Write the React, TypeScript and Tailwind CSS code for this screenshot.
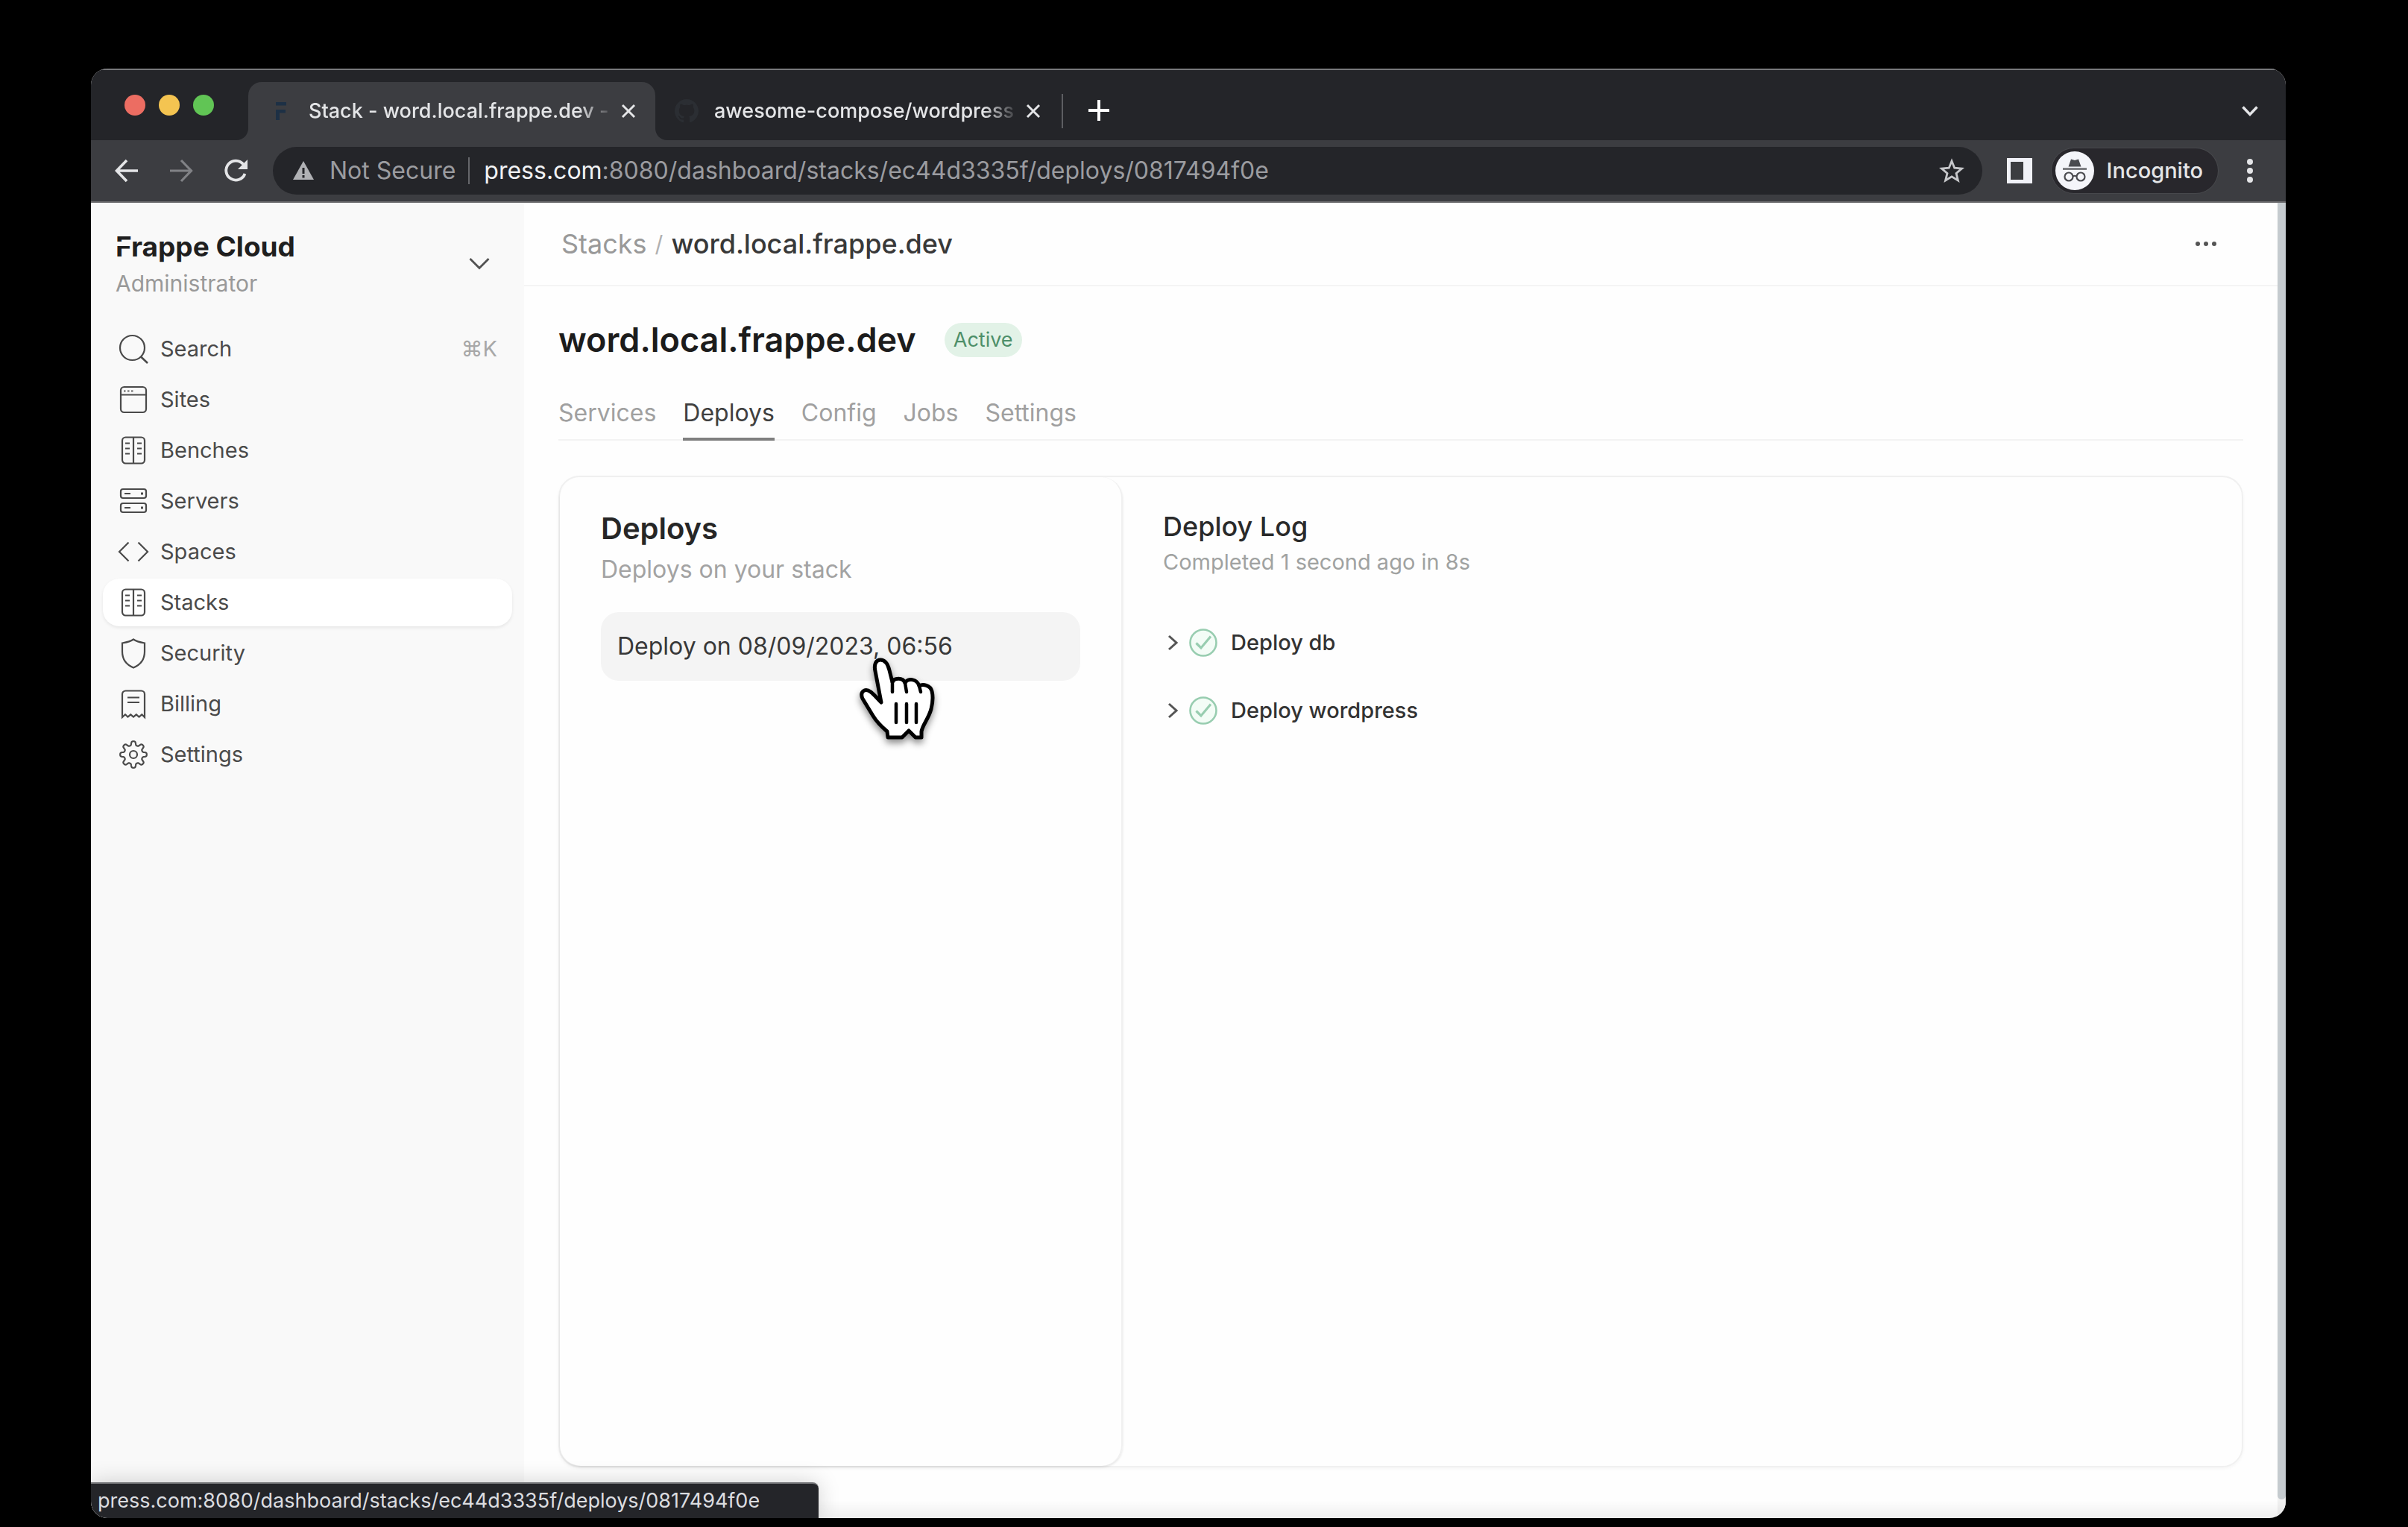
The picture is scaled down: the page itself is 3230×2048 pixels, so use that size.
import { useState, ReactNode } from "react";
import clsx from "clsx";

const DEPLOY_URL = "/dashboard/stacks/ec44d3335f/deploys/0817494f0e";

// Outline of the cog: a circle with eight soft teeth
const gearPath = (() => {
  const points: string[] = [];
  for (let i = 0; i < 160; i++) {
    const angle = (i / 160) * Math.PI * 2;
    const wave = Math.tanh(2 * Math.cos(8 * angle)) / Math.tanh(2);
    const radius = 15.2 + 2.6 * wave;
    points.push(`${(21 + radius * Math.sin(angle)).toFixed(2)} ${(21 - radius * Math.cos(angle)).toFixed(2)}`);
  }
  return `M${points.join("L")}Z`;
})();

function NavIcon({ children }: { children: ReactNode }) {
  return (
    <svg viewBox="0 0 42 42" className="size-[42px] shrink-0" fill="none" stroke="currentColor" strokeWidth="2.2" aria-hidden="true">
      {children}
    </svg>
  );
}

const icons: Record<string, ReactNode> = {
  search: (
    <NavIcon>
      <circle cx="19.5" cy="19.5" r="16.5" />
      <path d="M31 31.5 40 40" strokeWidth="2.6" />
    </NavIcon>
  ),
  window: (
    <NavIcon>
      <rect x="4" y="4" width="34" height="34" rx="4.5" />
      <path d="M4 14.5H38" />
      <path d="M8 9.5h2.5M13 9.5h2.5M18 9.5h2.5" strokeWidth="2.5" opacity="0.7" />
    </NavIcon>
  ),
  cabinet: (
    <NavIcon>
      <rect x="6" y="3.5" width="30" height="35" rx="4.5" />
      <path d="M21 3.5V38.5" />
      <path d="M10 11.5h6M10 18.5h6M10 25.5h6M26 11.5h6M26 18.5h6M26 25.5h6" />
    </NavIcon>
  ),
  servers: (
    <NavIcon>
      <rect x="4" y="5" width="34" height="12" rx="3" />
      <rect x="4" y="24" width="34" height="12" rx="3" />
      <path d="M9 11h8M9 30h8" />
      <path d="M31 11h3M31 30h3" strokeWidth="3" />
    </NavIcon>
  ),
  code: (
    <NavIcon>
      <path d="M14.5 8.5 2 21l12.5 12.5M27.5 8.5 40 21 27.5 33.5" />
    </NavIcon>
  ),
  shield: (
    <NavIcon>
      <path d="M21 2.5 C25 5.5 30 6.5 36 7.5 V19 C36 29 30.5 36.5 21 40.5 C11.5 36.5 6 29 6 19 V7.5 C12 6.5 17 5.5 21 2.5Z" />
    </NavIcon>
  ),
  receipt: (
    <NavIcon>
      <path d="M6 39V8a4.5 4.5 0 0 1 4.5-4.5h21A4.5 4.5 0 0 1 36 8v31l-3.7-3.7-3.8 3.2-3.7-3.2-3.8 3.2-3.7-3.2-3.8 3.2-3.5-3.2Z" />
      <path d="M13 12.5h16M13 19h16" />
    </NavIcon>
  ),
  gear: (
    <NavIcon>
      <path d={gearPath} strokeLinejoin="round" />
      <circle cx="21" cy="21" r="5" />
    </NavIcon>
  ),
};

const navItems = [
  { label: "Search", icon: "search", shortcut: "⌘K" },
  { label: "Sites", icon: "window" },
  { label: "Benches", icon: "cabinet" },
  { label: "Servers", icon: "servers" },
  { label: "Spaces", icon: "code" },
  { label: "Stacks", icon: "cabinet" },
  { label: "Security", icon: "shield" },
  { label: "Billing", icon: "receipt" },
  { label: "Settings", icon: "gear" },
];

const tabs = ["Services", "Deploys", "Config", "Jobs", "Settings"];

const deploySteps = ["Deploy db", "Deploy wordpress"];

function CloseIcon() {
  return (
    <svg viewBox="0 0 20 20" className="size-5" fill="none" stroke="currentColor" strokeWidth="3" aria-hidden="true">
      <path d="M2 2 18 18M18 2 2 18" />
    </svg>
  );
}

function BrowserTab({ title, active, favicon }: { title: string; active?: boolean; favicon: ReactNode }) {
  return (
    <div
      className={clsx(
        "flex h-[78px] items-center text-[#e4e5e7]",
        active ? "w-[546px] rounded-t-[18px] bg-[#3c3d41] pr-[26px] pl-7" : "w-[529px] pr-[28px] pl-[10px]"
      )}
    >
      <span className="flex w-8 shrink-0 justify-center">{favicon}</span>
      <span className="mr-2 ml-[21px] flex-1 mask-r-from-88% text-[27px] leading-9 font-medium whitespace-nowrap">{title}</span>
      <button type="button" aria-label="Close tab">
        <CloseIcon />
      </button>
    </div>
  );
}

function TabStrip() {
  return (
    <div className="flex h-24 items-end border-t-2 border-[#77787b] bg-[#242529] pr-[37px] pl-[45px]">
      <div className="mr-[30px] flex gap-[18px] self-center">
        <span className="size-7 rounded-full bg-[#ec6d62]" />
        <span className="size-7 rounded-full bg-[#f4c451]" />
        <span className="size-7 rounded-full bg-[#61c555]" />
      </div>
      <svg viewBox="0 0 16 16" className="size-4 fill-[#3c3d41]" aria-hidden="true">
        <path d="M16 0V16H0C9 16 16 9 16 0Z" />
      </svg>
      <BrowserTab
        active
        title="Stack - word.local.frappe.dev -"
        favicon={
          <svg viewBox="0 0 16 24" className="h-6 w-4 fill-[#1d3045]" aria-hidden="true">
            <path d="M1 0H15V4.5H1ZM1 10H14V14.5H6V24H1Z" />
          </svg>
        }
      />
      <svg viewBox="0 0 16 16" className="size-4 fill-[#3c3d41]" aria-hidden="true">
        <path d="M0 0V16H16C7 16 0 9 0 0Z" />
      </svg>
      <BrowserTab
        title="awesome-compose/wordpress"
        favicon={
          <svg viewBox="0 0 16 16" className="size-[34px] fill-[#2b2e33]" aria-hidden="true">
            <path d="M8 0C3.58 0 0 3.58 0 8c0 3.54 2.29 6.53 5.47 7.59.4.07.55-.17.55-.38 0-.19-.01-.82-.01-1.49-2.01.37-2.53-.49-2.69-.94-.09-.23-.48-.94-.82-1.13-.28-.15-.68-.52-.01-.53.63-.01 1.08.58 1.23.82.72 1.21 1.87.87 2.33.66.07-.52.28-.87.51-1.07-1.78-.2-3.64-.89-3.64-3.95 0-.87.31-1.59.82-2.15-.08-.2-.36-1.02.08-2.12 0 0 .67-.21 2.2.82.64-.18 1.32-.27 2-.27s1.36.09 2 .27c1.53-1.04 2.2-.82 2.2-.82.44 1.1.16 1.92.08 2.12.51.56.82 1.27.82 2.15 0 3.07-1.87 3.75-3.65 3.95.29.25.54.73.54 1.48 0 1.07-.01 1.93-.01 2.2 0 .21.15.46.55.38A8.01 8.01 0 0 0 16 8c0-4.42-3.58-8-8-8Z" />
          </svg>
        }
      />
      <div className="mb-4 h-[46px] w-0.5 bg-[#5d5e62]" />
      <button type="button" aria-label="New tab" className="mb-[26px] ml-[34px] text-white">
        <svg viewBox="0 0 28 28" className="size-7" fill="none" stroke="currentColor" strokeWidth="4" aria-hidden="true">
          <path d="M14 0V28M0 14H28" />
        </svg>
      </button>
      <button type="button" aria-label="Search tabs" className="mb-7 ml-auto text-[#e4e5e7]">
        <svg viewBox="0 0 22 22" className="size-[22px]" fill="none" stroke="currentColor" strokeWidth="3.5" aria-hidden="true">
          <path d="M1.5 5.5 11 15.5 20.5 5.5" />
        </svg>
      </button>
    </div>
  );
}

function Toolbar() {
  return (
    <div className="flex h-[84px] items-center border-b-2 border-[#6d6d6f] bg-[#3c3d41] pr-[42px] pl-[30px] text-[#e4e5e7]">
      <div className="mr-8 flex gap-[37px]">
        <button type="button" aria-label="Back">
          <svg viewBox="0 0 36 36" className="size-9" fill="none" stroke="currentColor" strokeWidth="3.6" aria-hidden="true">
            <path d="M33 18H5M18 4 4.5 18 18 32" />
          </svg>
        </button>
        <button type="button" aria-label="Forward" className="text-[#818286]">
          <svg viewBox="0 0 36 36" className="size-9" fill="none" stroke="currentColor" strokeWidth="3.2" aria-hidden="true">
            <path d="M3 18H31M18 4 31.5 18 18 32" />
          </svg>
        </button>
        <button type="button" aria-label="Reload">
          <svg viewBox="0 0 36 36" className="size-9" fill="none" stroke="currentColor" strokeWidth="3.8" aria-hidden="true">
            <path d="M28.5 9.5A13 13 0 1 0 30.5 22" />
            <path d="M34 3V16H21Z" fill="currentColor" stroke="none" />
          </svg>
        </button>
      </div>
      <div className="flex h-16 min-w-0 flex-1 items-center rounded-full bg-[#242529] pr-6 pl-[27px] text-[32px] leading-10 text-[#9b9ca0]">
        <svg viewBox="0 0 28 26" className="mr-[21px] h-[26px] w-7 shrink-0" aria-hidden="true">
          <path d="M14 0 28 25H0Z" fill="#b0b1b4" />
          <path d="M14 9V17M14 19V22.5" stroke="#242529" strokeWidth="3" />
        </svg>
        <span>Not Secure</span>
        <span className="mr-[19px] ml-[17px] h-9 w-0.5 bg-[#66676b]" />
        <span className="flex-1 truncate">
          <span className="text-[#f1f2f4]">press.com</span>:8080{DEPLOY_URL}
        </span>
        <button type="button" aria-label="Bookmark this page" className="text-[#c6c7ca]">
          <svg viewBox="0 0 34 34" className="size-[34px]" fill="none" stroke="currentColor" strokeWidth="2.8" aria-hidden="true">
            <path d="m17 4 3.7 9.2 9.8.8-7.5 6.4 2.4 9.6L17 24.8 8.6 30 11 20.4 3.5 14l9.8-.8Z" />
          </svg>
        </button>
      </div>
      <button type="button" aria-label="Side panel" className="ml-[33px]">
        <svg viewBox="0 0 34 34" className="size-[34px]" aria-hidden="true">
          <path d="M0 0H34V34H0ZM5 5V29H22V5Z" fill="#f1f2f8" fillRule="evenodd" />
        </svg>
      </button>
      <button type="button" className="ml-[26px] flex h-[60px] items-center gap-[17px] rounded-full bg-[#28272c] pr-5 pl-[5px] ring-1 ring-[#47484c]">
        <svg viewBox="0 0 52 52" className="size-[52px]" fill="none" stroke="#4a4b50" strokeWidth="2.2" aria-hidden="true">
          <circle cx="26" cy="26" r="26" fill="#f4f5fa" stroke="none" />
          <path d="M21 10.5 26 12 31 10.5 34.5 20.5H17.5Z" fill="#4a4b50" stroke="none" />
          <path d="M10 23.5H42" stroke="#7d7e83" strokeWidth="2.8" />
          <circle cx="18" cy="34" r="5.5" />
          <circle cx="34" cy="34" r="5.5" />
          <path d="M23.500 33.500Q26 32 28.500 33.500" />
        </svg>
        <span className="text-[29px] leading-9 font-medium">Incognito</span>
      </button>
      <button type="button" aria-label="Browser menu" className="ml-[37px]">
        <svg viewBox="0 0 12 36" className="h-9 w-3 fill-current" aria-hidden="true">
          <circle cx="6" cy="6" r="4" />
          <circle cx="6" cy="18" r="4" />
          <circle cx="6" cy="30" r="4" />
        </svg>
      </button>
    </div>
  );
}

function Sidebar() {
  return (
    <aside className="w-[581px] shrink-0 bg-[#f9f9f9] px-4 pt-[34px]">
      <button type="button" className="flex w-full items-center justify-between pr-[30px] pl-[17px] text-left">
        <span className="block">
          <span className="relative block text-[37px] leading-[50px] font-bold text-[#1f1f1f]">
            Frappe Cloud
            {/* notch in the F of the wordmark */}
            <span className="absolute top-[18px] left-0 h-1.5 w-5 bg-[#f9f9f9]" />
          </span>
          <span className="mt-1 block text-[30px] leading-10 text-[#999999]">Administrator</span>
        </span>
        <svg viewBox="0 0 28 28" className="size-7 text-[#525252]" fill="none" stroke="currentColor" strokeWidth="2.8" aria-hidden="true">
          <path d="M1.5 8 14 20.5 26.5 8" />
        </svg>
      </button>
      <nav className="mt-[36px] flex flex-col gap-1">
        {navItems.map((item) => (
          <a
            key={item.label}
            href="#"
            className={clsx(
              "flex h-16 items-center gap-[15px] rounded-[22px] pr-5 pl-5 text-[29px] leading-9 text-[#4a4a4a]",
              item.label === "Stacks" && "bg-white shadow-[0_2px_4px_rgba(0,0,0,0.08)]"
            )}
          >
            {icons[item.icon]}
            <span>{item.label}</span>
            {item.shortcut && <span className="ml-auto text-[#a8a8a8]">{item.shortcut}</span>}
          </a>
        ))}
      </nav>
    </aside>
  );
}

function HandPointer() {
  return (
    <svg
      viewBox="-4 -4 112 124"
      className="pointer-events-none absolute top-[239px] left-[398px] h-[124px] w-28 drop-shadow-[0_5px_5px_rgba(0,0,0,0.45)]"
      fill="none"
      stroke="#000000"
      strokeWidth="5"
      strokeLinejoin="round"
      strokeLinecap="round"
      aria-hidden="true"
    >
      <path
        d="M29 59 21 17C19 8 22 2 28 2C35 2 38 8 40 16L44 32C46 26 58 25 61 33C64 26 77 27 80 37C85 34 95 36 97 44C99 52 98 60 96 68C92 82 85 88 83 98V106H75L66 97 57 106H38L37 98C30 92 24 87 18 77L4 54C0 45 7 39 15 45C20 49 25 55 29 59Z"
        fill="#ffffff"
      />
      <path d="M44 32V45M61 33 63 45M80 37 82 45" strokeWidth="4.5" />
      <path d="M49 61V86M63 61V86M76 61V86" strokeWidth="4.5" />
    </svg>
  );
}

function DeployList() {
  return (
    <section className="relative w-[755px] shrink-0 rounded-[28px] border-r-2 border-[#f0f0f0] pt-[45px] pr-[55px] pl-[55px] shadow-[0_2px_3px_rgba(0,0,0,0.1)]">
      <h2 className="text-[40px] leading-[48px] font-semibold text-[#262626]">Deploys</h2>
      <p className="mt-[11px] text-[32px] leading-10 text-[#a3a3a3]">Deploys on your stack</p>
      <button type="button" className="mt-[37px] h-[92px] w-full rounded-[24px] bg-[#f4f4f4] px-[22px] text-left text-[32px] leading-10 text-[#383838]">
        Deploy on 08/09/2023, 06:56
      </button>
      <HandPointer />
    </section>
  );
}

function DeployLog() {
  return (
    <section className="min-w-0 flex-1 pt-[44px] pl-[54px]">
      <h3 className="text-[36px] leading-[44px] font-medium text-[#2a2a2a]">Deploy Log</h3>
      <p className="mt-2 text-[29px] leading-9 text-[#a0a2a1]">Completed 1 second ago in 8s</p>
      <ul className="mt-[44px]">
        {deploySteps.map((step) => (
          <li key={step}>
            <button type="button" className="flex h-[91px] items-center pl-1.5 text-[29px] leading-9 font-medium text-[#333333]">
              <svg viewBox="0 0 14 22" className="h-[22px] w-3.5 text-[#555555]" fill="none" stroke="currentColor" strokeWidth="3" aria-hidden="true">
                <path d="M2 2 12 11 2 20" />
              </svg>
              <svg viewBox="0 0 38 38" className="mr-[18px] ml-[15px] size-[38px]" fill="none" stroke="#98cdb0" strokeWidth="2.6" aria-hidden="true">
                <circle cx="19" cy="19" r="17.5" fill="#f3fcf6" />
                <path d="M9.5 19.5 16 26 29 10.5" strokeWidth="3.2" />
              </svg>
              {step}
            </button>
          </li>
        ))}
      </ul>
    </section>
  );
}

export default function App() {
  const [activeTab, setActiveTab] = useState("Deploys");

  return (
    <div className="flex min-h-screen bg-black pt-[92px] pr-[164px] pb-3 pl-[122px] font-['Inter','Liberation_Sans',sans-serif]">
      <div className="relative flex min-w-0 flex-1 flex-col overflow-hidden rounded-[22px] bg-[#fefefe]">
        <TabStrip />
        <Toolbar />

        <div className="flex flex-1">
          <Sidebar />
          <main className="flex min-w-0 flex-1 flex-col">
            <header className="flex h-[112px] items-center justify-between border-b-2 border-[#f4f4f4] pr-[81px] pl-[50px]">
              <div className="flex items-center gap-[11px] text-[36px] leading-[44px]">
                <a href="#" className="text-[#999999]">
                  Stacks
                </a>
                <span className="text-[30px] text-[#b0b0b0]">/</span>
                <span className="font-medium text-[#383838]">word.local.frappe.dev</span>
              </div>
              <button type="button" aria-label="More options">
                <svg viewBox="0 0 30 8" className="h-2 w-[30px] fill-[#555555]" aria-hidden="true">
                  <circle cx="4" cy="4" r="3" />
                  <circle cx="15" cy="4" r="3" />
                  <circle cx="26" cy="4" r="3" />
                </svg>
              </button>
            </header>

            <div className="flex flex-1 flex-col pr-[46px] pb-[68px] pl-[46px]">
              <div className="mt-[42px] flex items-center gap-[38px]">
                <h1 className="text-[45px] leading-[60px] font-semibold text-[#1c1c1c]">word.local.frappe.dev</h1>
                <span className="rounded-full bg-[#e2f2e7] px-3 text-[27px] leading-[46px] text-[#4d8f69]">Active</span>
              </div>

              {/* Tabs */}
              <nav className="mt-[48px] flex gap-9 border-b-2 border-[#f3f3f3]">
                {tabs.map((tab) => (
                  <button
                    key={tab}
                    type="button"
                    onClick={() => setActiveTab(tab)}
                    className={clsx(
                      "-mb-0.5 border-b-4 pb-[13px] text-[32px] leading-10",
                      tab === activeTab ? "border-[#7f7f7f] text-[#404040]" : "border-transparent text-[#a0a0a0]"
                    )}
                  >
                    {tab}
                  </button>
                ))}
              </nav>

              <div className="mt-[47px] flex flex-1 rounded-[28px] border-2 border-[#f0f0f0] shadow-[0_2px_4px_rgba(0,0,0,0.04)]">
                <DeployList />
                <DeployLog />
              </div>
            </div>
          </main>
          <div className="w-[11px] shrink-0 bg-[#f1f1f1] pb-[25px]">
            <div className="h-full rounded-b-[6px] bg-[#c5cbcf]" />
          </div>
        </div>

        {/* Shade along the window's lower edge, and the link target bubble */}
        <div className="pointer-events-none absolute inset-x-0 bottom-0 h-6 bg-linear-to-t from-black/6 to-transparent" />
        <div className="absolute bottom-0 left-0 h-12 w-[976px] rounded-tr-[8px] border-t-2 border-[#77787b] bg-[#242529] pl-[9px] text-[27px] leading-[46px] text-[#dcdde0] shadow-[0_0_30px_rgba(0,0,0,0.18)]">
          press.com:8080{DEPLOY_URL}
        </div>
      </div>
    </div>
  );
}
